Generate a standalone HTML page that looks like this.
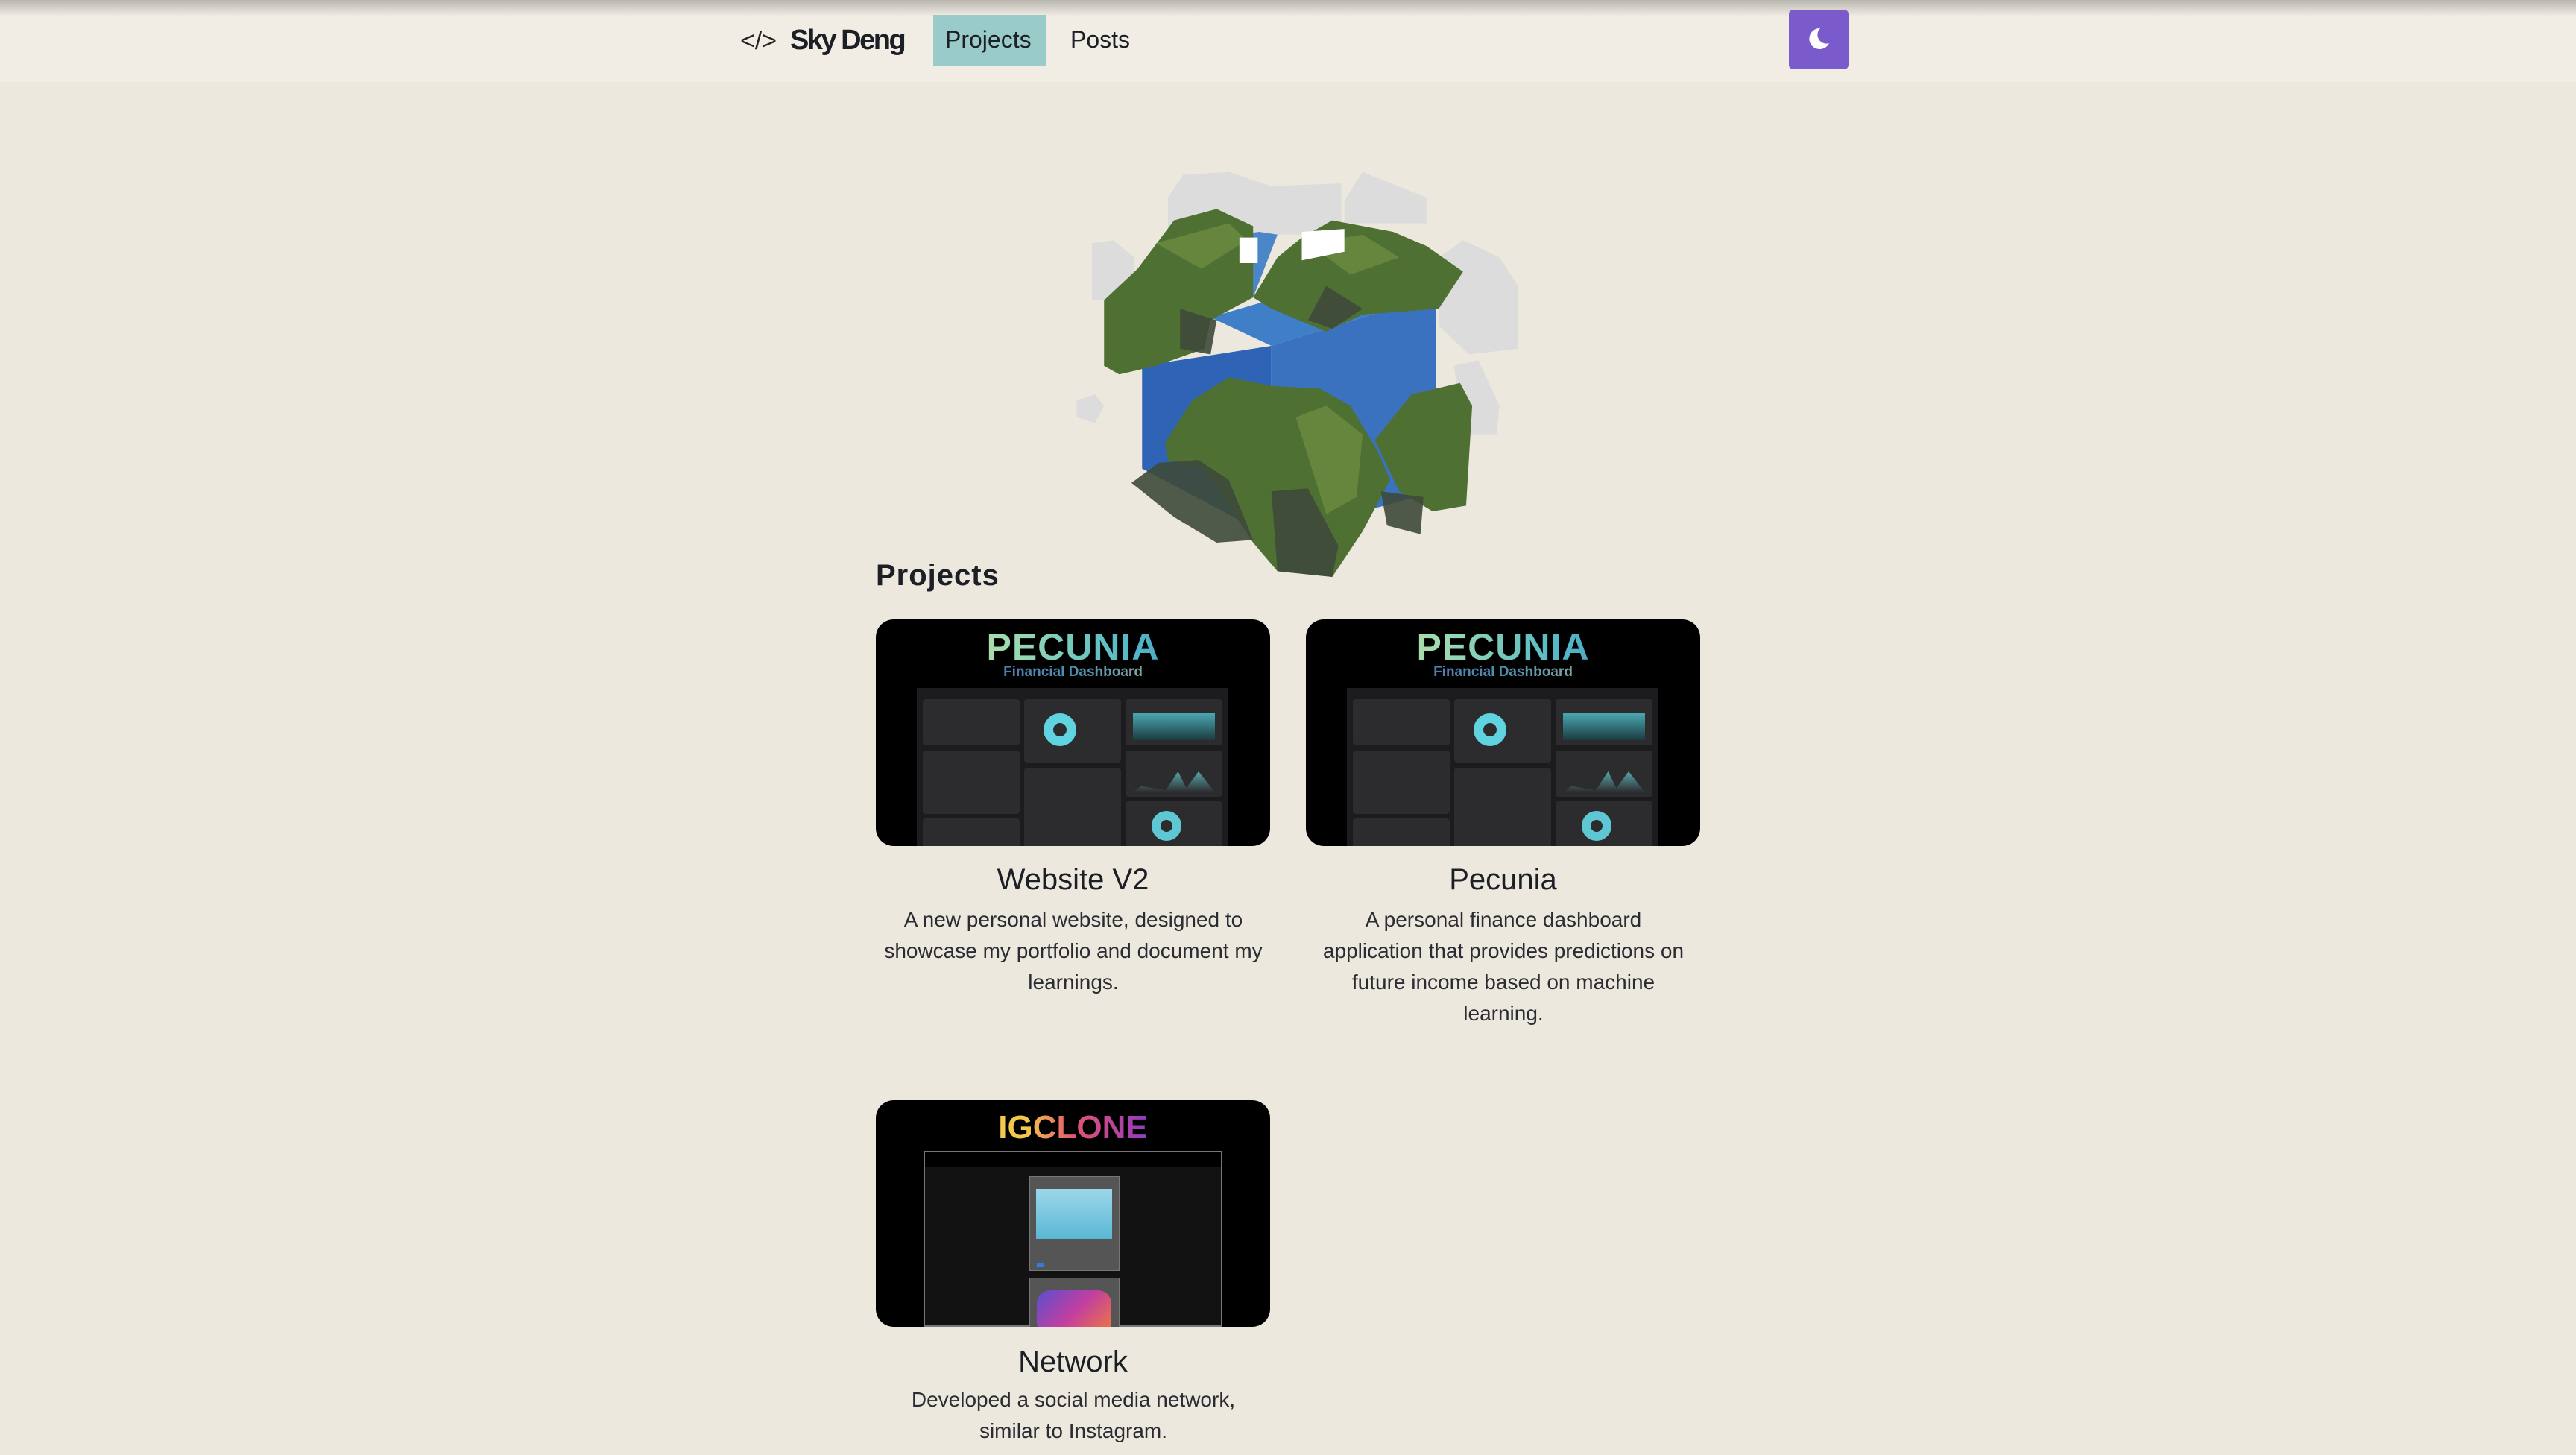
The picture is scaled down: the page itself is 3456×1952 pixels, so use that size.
<!DOCTYPE html>
<html><head><meta charset="utf-8"><style>
*{margin:0;padding:0;box-sizing:border-box}
body{width:3456px;height:1952px;background:#ede8dd;font-family:"Liberation Sans",sans-serif;color:#1d1f26;position:relative;overflow:hidden}
.nav{position:absolute;left:0;top:0;width:3456px;height:110px;background:#f1ede5}
.nav:before{content:"";position:absolute;left:0;top:0;right:0;height:22px;background:linear-gradient(#b9b6b0,#f1ede5)}
.abs{position:absolute}
.card{position:absolute;width:529px;height:304px;background:#000;border-radius:24px;overflow:hidden}
.t{position:absolute;width:529px;text-align:center;font-size:40px}
.d{position:absolute;width:600px;text-align:center;font-size:28px;line-height:42px;color:#2a2c33;white-space:nowrap}
.pec{position:absolute;width:529px;text-align:center;top:8px;font-size:50px;font-weight:bold;letter-spacing:1px;background:linear-gradient(90deg,#e6cf8a,#9fdbb0,#4fb6c9,#5b67a8);-webkit-background-clip:text;background-clip:text;color:transparent;left:0}
.fd{position:absolute;width:529px;text-align:center;top:60px;font-size:19px;font-weight:bold;background:linear-gradient(90deg,#6a55a8,#4a8fb0,#e8c27a);-webkit-background-clip:text;background-clip:text;color:transparent;left:0}
.dash{position:absolute;left:55px;top:92px;width:418px;height:230px;background:#1c1c1e}
.p{position:absolute;background:#2c2c2f;border-radius:4px}
</style></head><body>
<div class="nav"></div>
<div class="abs" style="left:993px;top:36px;font-size:34px;color:#222">&lt;/&gt;</div>
<div class="abs" style="left:1060px;top:33px;font-size:38px;font-weight:bold;letter-spacing:-2.5px;color:#1d1f26">Sky Deng</div>
<div class="abs" style="left:1252px;top:20px;width:152px;height:68px;background:#99cbc8"></div>
<div class="abs" style="left:1268px;top:35px;font-size:32px;color:#1d1f26">Projects</div>
<div class="abs" style="left:1436px;top:35px;font-size:32px;color:#1d1f26">Posts</div>
<div class="abs" style="left:2400px;top:13px;width:80px;height:80px;background:#7b5bcc;border-radius:6px"></div>
<svg class="abs" style="left:2422px;top:34px" width="36" height="36" viewBox="0 0 36 36"><path d="M20 4 A14 14 0 1 0 32 24 A12 12 0 0 1 20 4Z" fill="#fff"/></svg>

<svg class="abs" style="left:1420px;top:200px" width="640" height="600" viewBox="0 0 1568 1568" preserveAspectRatio="none">
<g fill="#dcdcdc">
<polygon points="360,170 410,90 560,80 700,130 930,120 930,300 360,300"/>
<polygon points="940,180 1000,80 1210,170 1210,260 940,260"/>
<polygon points="1250,380 1330,320 1450,380 1510,480 1510,700 1350,720 1250,620"/>
<polygon points="110,330 180,320 250,380 250,530 110,530"/>
<polygon points="60,880 120,860 150,900 120,960 60,940"/>
<polygon points="1300,760 1380,740 1450,900 1440,1000 1330,1000"/>
</g>
<polygon points="500,590 950,450 1240,510 700,690" fill="#3f7fc8"/>
<polygon points="275,760 700,690 700,1360 275,1120" fill="#2f63b5"/>
<polygon points="700,690 1240,510 1240,1200 700,1360" fill="#3a72c0"/>
<polygon points="590,300 660,290 720,300 640,520 590,470" fill="#4a86c8"/>
<g fill="#4f7033">
<polygon points="150,530 260,420 380,250 520,210 640,270 640,520 500,600 480,700 320,760 200,790 150,760"/>
<polygon points="640,520 720,380 800,310 900,250 1100,290 1210,340 1330,430 1250,560 1000,580 880,640 700,560"/>
<polygon points="350,1030 440,880 560,800 700,830 860,840 960,900 1050,1060 1090,1160 1000,1340 900,1500 720,1480 640,1380 480,1120 360,1090"/>
<polygon points="1040,1020 1160,860 1320,820 1360,900 1340,1250 1230,1270 1120,1200"/>
</g>
<g fill="#3e4a3a" opacity="0.9">
<polygon points="240,1170 330,1100 460,1090 560,1160 640,1370 520,1380 380,1290"/>
<polygon points="700,1200 820,1190 920,1390 900,1500 720,1480"/>
<polygon points="1060,1200 1200,1220 1190,1350 1080,1320"/>
<polygon points="400,560 520,600 500,720 400,700"/>
<polygon points="880,480 1000,560 900,630 820,600"/>
</g>
<g fill="#6b8c40" opacity="0.8">
<polygon points="320,330 560,260 620,320 470,420"/>
<polygon points="820,330 1000,300 1120,380 960,440"/>
<polygon points="780,940 880,900 1000,1000 980,1220 880,1280"/>
</g>
<polygon points="595,310 655,310 655,400 595,400" fill="#fff"/>
<polygon points="800,290 940,280 940,360 800,390" fill="#fff"/>
</svg>

<div class="abs" style="left:1175px;top:750px;font-size:40px;font-weight:bold;letter-spacing:1px">Projects</div>

<div class="card" style="left:1175px;top:831px">
<div class="pec">PECUNIA</div><div class="fd">Financial Dashboard</div>
<div class="dash">
<div class="p" style="left:8px;top:15px;width:130px;height:62px"></div>
<div class="p" style="left:144px;top:15px;width:130px;height:85px"></div>
<div class="p" style="left:280px;top:15px;width:130px;height:62px"></div>
<div class="p" style="left:8px;top:84px;width:130px;height:85px"></div>
<div class="p" style="left:144px;top:107px;width:130px;height:110px"></div>
<div class="p" style="left:280px;top:84px;width:130px;height:62px"></div>
<div class="p" style="left:280px;top:152px;width:130px;height:80px"></div>
<div class="p" style="left:8px;top:175px;width:130px;height:55px"></div>
<div class="abs" style="left:170px;top:34px;width:44px;height:44px;border-radius:50%;border:13px solid #5fd3e0"></div>
<div class="abs" style="left:290px;top:34px;width:110px;height:36px;background:linear-gradient(#4aa6b0,#1c3b40)"></div>
<div class="abs" style="left:290px;top:112px;width:110px;height:28px;background:linear-gradient(#5aa7ab,#2c2c2f);clip-path:polygon(0 100%,10% 70%,40% 90%,55% 0,65% 80%,80% 0,100% 100%)"></div>
<div class="abs" style="left:315px;top:165px;width:40px;height:40px;border-radius:50%;border:12px solid #5fc7d4"></div>
</div>
</div>
<div class="t" style="left:1175px;top:1158px">Website V2</div>
<div class="d" style="left:1140px;top:1213px">A new personal website, designed to<br>showcase my portfolio and document my<br>learnings.</div>

<div class="card" style="left:1752px;top:831px">
<div class="pec">PECUNIA</div><div class="fd">Financial Dashboard</div>
<div class="dash">
<div class="p" style="left:8px;top:15px;width:130px;height:62px"></div>
<div class="p" style="left:144px;top:15px;width:130px;height:85px"></div>
<div class="p" style="left:280px;top:15px;width:130px;height:62px"></div>
<div class="p" style="left:8px;top:84px;width:130px;height:85px"></div>
<div class="p" style="left:144px;top:107px;width:130px;height:110px"></div>
<div class="p" style="left:280px;top:84px;width:130px;height:62px"></div>
<div class="p" style="left:280px;top:152px;width:130px;height:80px"></div>
<div class="p" style="left:8px;top:175px;width:130px;height:55px"></div>
<div class="abs" style="left:170px;top:34px;width:44px;height:44px;border-radius:50%;border:13px solid #5fd3e0"></div>
<div class="abs" style="left:290px;top:34px;width:110px;height:36px;background:linear-gradient(#4aa6b0,#1c3b40)"></div>
<div class="abs" style="left:290px;top:112px;width:110px;height:28px;background:linear-gradient(#5aa7ab,#2c2c2f);clip-path:polygon(0 100%,10% 70%,40% 90%,55% 0,65% 80%,80% 0,100% 100%)"></div>
<div class="abs" style="left:315px;top:165px;width:40px;height:40px;border-radius:50%;border:12px solid #5fc7d4"></div>
</div>
</div>
<div class="t" style="left:1752px;top:1158px">Pecunia</div>
<div class="d" style="left:1717px;top:1213px">A personal finance dashboard<br>application that provides predictions on<br>future income based on machine<br>learning.</div>

<div class="card" style="left:1175px;top:1476px">
<div class="abs" style="left:0;top:12px;width:529px;text-align:center;font-size:44px;font-weight:bold;background:linear-gradient(90deg,#f2c94c 0,#f2c94c 38%,#e5556e 50%,#a43fb0 65%,#7a3bd0 72%);-webkit-background-clip:text;background-clip:text;color:transparent">IGCLONE</div>
<div class="abs" style="left:64px;top:68px;width:401px;height:236px;border:2px solid #777;background:#121212">
<div class="abs" style="left:0;top:0;width:397px;height:20px;background:#000"></div>
<div class="abs" style="left:140px;top:32px;width:121px;height:127px;background:#555;border:1px solid #777"></div>
<div class="abs" style="left:149px;top:49px;width:102px;height:67px;background:linear-gradient(#9cd7ea,#5ab7d4)"></div>
<div class="abs" style="left:150px;top:148px;width:10px;height:6px;background:#2f7de0"></div>
<div class="abs" style="left:140px;top:168px;width:121px;height:70px;background:#555;border:1px solid #777"></div>
<div class="abs" style="left:150px;top:185px;width:100px;height:60px;border-radius:18px;background:linear-gradient(135deg,#5a4fd0,#c23fa0,#f27a3a)"></div>
</div>
</div>
<div class="t" style="left:1175px;top:1805px">Network</div>
<div class="d" style="left:1140px;top:1857px">Developed a social media network,<br>similar to Instagram.</div>
</body></html>
